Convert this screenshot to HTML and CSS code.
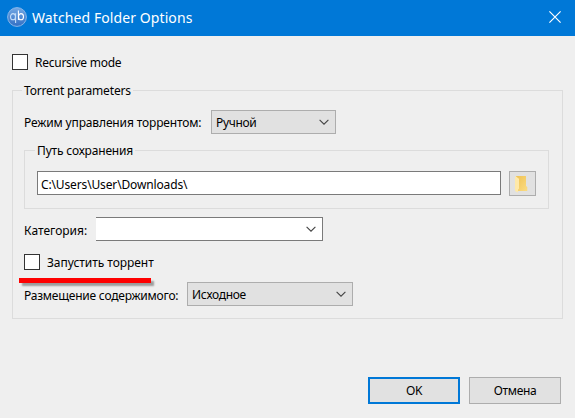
FILE: index.html
```html
<!DOCTYPE html>
<html lang="ru">
<head>
<meta charset="utf-8">
<title>Watched Folder Options</title>
<link rel="stylesheet" href="styles.css">
</head>
<body>
<header class="titlebar">
  <svg class="logo" width="20" height="20" viewBox="0 0 20 20">
    <defs><linearGradient id="g" x1="0" y1="0" x2="0" y2="1"><stop offset="0" stop-color="#73a8e4"/><stop offset="1" stop-color="#326fc4"/></linearGradient></defs>
    <circle cx="10" cy="10" r="9.4" fill="url(#g)" stroke="#87b6ea" stroke-width="1"/>
    <g fill="none" stroke-width="1.1"><ellipse cx="6" cy="9.7" rx="2.5" ry="3.1" stroke="#c5def8"/><path d="M8.6 6.3v9.6" stroke="#c5def8"/><ellipse cx="14" cy="9.7" rx="2.5" ry="3.1" stroke="#fff"/><path d="M11.4 3.4v9.6" stroke="#fff"/></g>
  </svg>
  <h1 class="title"><span class="t-title">Watched Folder Options</span></h1>
  <svg class="close" width="12" height="12" viewBox="0 0 12 12"><path d="M.4 .4 11.6 11.6M11.6 .4 .4 11.6" stroke="#fff" stroke-width="1.15"/></svg>
</header>
<main class="dialog">
  <label class="check"><span class="box"></span><span class="t-recursive">Recursive mode</span></label>
  <fieldset class="group outer">
    <legend><span class="t-params">Torrent parameters</span></legend>
    <div class="row">
      <span class="label label-mode"><span class="t-mode">Режим управления торрентом:</span></span>
      <div class="combo combo-mode"><span class="t-manual">Ручной</span><svg class="arrow" width="10" height="6" viewBox="0 0 10 6"><path d="M.6 .9 5 5.2 9.4 .9"/></svg></div>
    </div>
    <fieldset class="group inner">
      <legend><span class="t-path">Путь сохранения</span></legend>
      <div class="path-row">
        <div class="input"><span class="t-dir">C:\Users\User\Downloads\</span></div>
        <div class="browse"><svg width="13" height="17" viewBox="0 0 13 17"><defs><linearGradient id="f" x1="0" y1="0" x2="1" y2="1"><stop offset="0" stop-color="#efc254"/><stop offset="1" stop-color="#fbdc83"/></linearGradient></defs><path d="M1 0h10v10l1.3 1v4H3z" fill="url(#f)"/><path d="M0 1l1-.4 3 2.2v10l-1 .7v3L0 15z" fill="#ffe9a9"/></svg></div>
      </div>
    </fieldset>
    <div class="row row-category">
      <span class="label label-category"><span class="t-category">Категория:</span></span>
      <div class="combo combo-category"><svg class="arrow" width="10" height="6" viewBox="0 0 10 6"><path d="M.6 .9 5 5.2 9.4 .9"/></svg></div>
    </div>
    <div class="start">
      <label class="check"><span class="box"></span><span class="t-start">Запустить торрент</span></label>
      <i class="underline"></i>
    </div>
    <div class="row row-layout">
      <span class="label label-layout"><span class="t-layout">Размещение содержимого:</span></span>
      <div class="combo combo-layout"><span class="t-original">Исходное</span><svg class="arrow" width="10" height="6" viewBox="0 0 10 6"><path d="M.6 .9 5 5.2 9.4 .9"/></svg></div>
    </div>
  </fieldset>
  <footer class="actions">
    <div class="btn primary"><span class="t-ok">OK</span></div>
    <div class="btn"><span class="t-cancel">Отмена</span></div>
  </footer>
</main>
</body>
</html>
```
FILE: styles.css
```css
* { box-sizing: border-box; }
body {
  margin: 0;
  width: 575px;
  height: 418px;
  overflow: hidden;
  background: #efefef;
  color: #000;
  font: 12px/17px "Noto Sans", "Open Sans", sans-serif;
  white-space: nowrap;
}
svg { display: block; flex: none; }
.titlebar {
  display: flex;
  align-items: center;
  height: 36px;
  padding: 0 14px 2px 7px;
  background: #0078d7;
  color: #fff;
}
.title { margin: 0 auto 0 5px; padding-top: 1px; font-size: 14px; font-weight: 400; line-height: 20px; letter-spacing: .09px; }
.dialog { padding: 18px 12px 0; }
.check { display: flex; align-items: center; height: 16px; gap: 7px; }
.box { width: 16px; height: 16px; border: 1px solid #333; background: #fff; }
.group { margin: 0; min-width: 0; border: 1px solid #dcdcdc; }
.group legend { height: 17px; padding: 0 2px; }
.outer { width: 551px; height: 237px; margin-top: 12px; padding: 11px 12px 12px 11px; }
.outer > legend { margin-left: -2px; }
.inner { width: 525px; height: 67px; margin-top: 8px; padding: 12px; }
.inner > legend { margin-left: -2px; }
.row { display: flex; align-items: center; height: 24px; }
.label-mode { width: 187px; }
.label-category { width: 72px; padding-top: 2px; }
.label-layout { width: 163px; padding-top: 2px; }
.combo {
  display: flex;
  align-items: center;
  height: 24px;
  padding: 0 6px 0 4px;
  border: 1px solid #adadad;
  background: #e1e1e1;
}
.combo-mode { width: 125px; }
.combo-category { width: 227px; border-color: #7a7a7a; border-left: 0; background: #fff; }
.combo-layout { width: 166px; }
.arrow { margin-left: auto; fill: none; stroke: #444; stroke-width: 1.1; }
.path-row { display: flex; gap: 8px; }
.input { width: 464px; height: 24px; padding: 4px 3px 0; border: 1px solid #7a7a7a; background: #fff; }
.browse { width: 27px; height: 25px; padding: 4px 0 0 5px; border: 1px solid #adadad; background: #e1e1e1; }
.row-category { margin-top: 8px; }
.start { position: relative; margin-top: 13px; }
.underline {
  position: absolute;
  left: -5px;
  top: 24px;
  width: 132px;
  height: 5px;
  background: #fe0000;
  box-shadow: 3px 3px 2px rgba(0, 0, 0, .35);
}
.row-layout { margin-top: 12px; }
.actions { display: flex; justify-content: flex-end; gap: 9px; margin: 58px 2px 0 0; }
.btn { display: flex; align-items: center; justify-content: center; width: 92px; height: 27px; border: 1px solid #adadad; background: #e1e1e1; }
.primary { border: 2px solid #0078d7; }
.t-recursive { letter-spacing: -.25px; }
.t-params { letter-spacing: -.16px; }
.t-mode { letter-spacing: -.14px; }
.t-manual { letter-spacing: -.35px; }
.t-path { letter-spacing: -.17px; }
.t-dir { letter-spacing: -.14px; }
.t-start { letter-spacing: -.05px; }
.t-layout { letter-spacing: -.22px; }
.t-original { letter-spacing: -.3px; }
.t-cancel, .t-ok { letter-spacing: -.35px; }
```
